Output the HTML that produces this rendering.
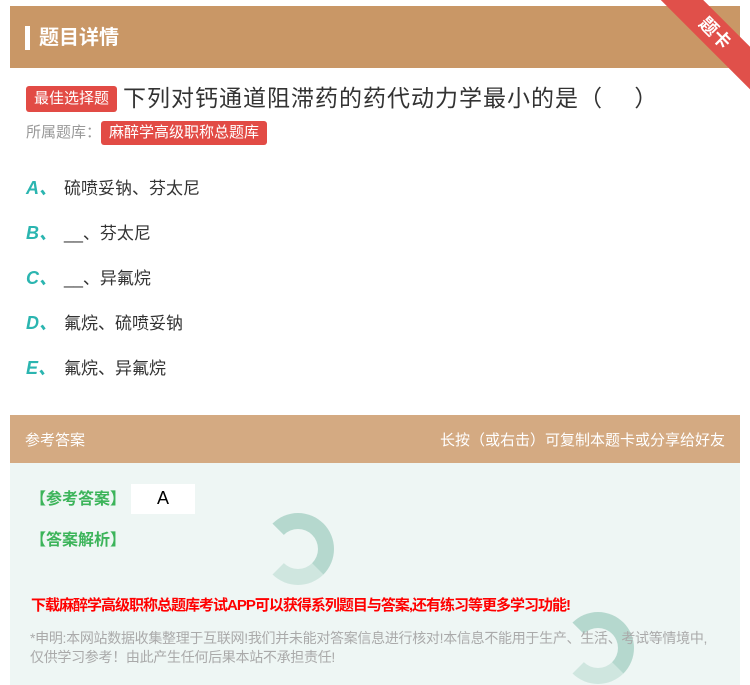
<!DOCTYPE html>
<html><head><meta charset="utf-8"><style>
*{margin:0;padding:0;box-sizing:border-box}
body{width:750px;height:685px;overflow:hidden;background:#fff;font-family:"Liberation Sans","Noto Sans CJK SC",sans-serif;position:relative}
.hdr{position:absolute;left:10px;top:6px;width:730px;height:62px;background:#c99766}
.hdr .bar{position:absolute;left:15px;top:20px;width:5px;height:24px;background:#fff}
.hdr .t{position:absolute;left:29px;top:15px;color:#fff;font-size:20px;font-weight:bold}
.rib{position:absolute;right:-30px;top:18px;width:130px;height:30px;background:#e0504a;color:#fff;transform:rotate(45deg);text-align:center;font-size:18px;line-height:30px;font-weight:bold}
.q{position:absolute;left:26px;top:79px;font-size:23px;color:#333;white-space:nowrap;letter-spacing:1px}
.tag{display:inline-block;background:#e24b45;color:#fff;font-size:15px;padding:0 8px;border-radius:3px;height:26px;line-height:26px;vertical-align:3px;margin-right:6px;letter-spacing:0}
.src{position:absolute;left:26px;top:121px;font-size:15px;color:#999}
.src .tag{font-size:15px;height:24px;line-height:24px;vertical-align:0}
.opt{position:absolute;left:26px;font-size:17px;color:#333}
.opt b{color:#2bb5b0;font-style:italic;font-size:18px;display:inline-block;width:38px}
.ah{position:absolute;left:10px;top:415px;width:730px;height:48px;background:#d4aa82;color:#fff;font-size:15px}
.ah .l{position:absolute;left:15px;top:14px}.ah .r{position:absolute;right:15px;top:14px}
.ab{position:absolute;left:10px;top:463px;width:730px;height:222px;background:#eef6f4}
.g{position:absolute;left:30px;color:#3cb45a;font-size:16px;font-weight:bold}
.dl{position:absolute;left:31px;top:594px;color:#f00;font-size:15px;font-weight:bold;letter-spacing:-1px}
.nt{position:absolute;left:30px;top:629px;width:680px;color:#aaa;font-size:14px;line-height:19px;letter-spacing:-0.3px}
.logo{position:absolute;border-radius:50%;border:16px solid #b5d8ce;border-left-color:transparent;border-bottom-color:#cfe6df}
</style></head><body>
<div class="hdr"><div class="bar"></div><div class="t">题目详情</div></div>
<div class="rib">题卡</div>
<div class="q"><span class="tag">最佳选择题</span>下列对钙通道阻滞药的药代动力学最小的是（　 ）</div>
<div class="src">所属题库：<span class="tag">麻醉学高级职称总题库</span></div>
<div class="opt" style="top:174px"><b>A、</b>硫喷妥钠、芬太尼</div>
<div class="opt" style="top:219px"><b>B、</b>__、芬太尼</div>
<div class="opt" style="top:264px"><b>C、</b>__、异氟烷</div>
<div class="opt" style="top:309px"><b>D、</b>氟烷、硫喷妥钠</div>
<div class="opt" style="top:354px"><b>E、</b>氟烷、异氟烷</div>
<div class="ah"><span class="l">参考答案</span><span class="r">长按（或右击）可复制本题卡或分享给好友</span></div>
<div class="ab"></div>
<div class="logo" style="left:262px;top:513px;width:72px;height:72px"></div>
<div class="logo" style="left:562px;top:612px;width:72px;height:72px"></div>
<div class="g" style="top:485px">【参考答案】</div>
<div style="position:absolute;left:131px;top:484px;width:64px;height:30px;background:#fff;font-size:18px;text-align:center;line-height:28px">A</div>
<div class="g" style="top:526px">【答案解析】</div>
<div class="dl">下载麻醉学高级职称总题库考试APP可以获得系列题目与答案,还有练习等更多学习功能!</div>
<div class="nt">*申明:本网站数据收集整理于互联网!我们并未能对答案信息进行核对!本信息不能用于生产、生活、考试等情境中,仅供学习参考！由此产生任何后果本站不承担责任!</div>
</body></html>
